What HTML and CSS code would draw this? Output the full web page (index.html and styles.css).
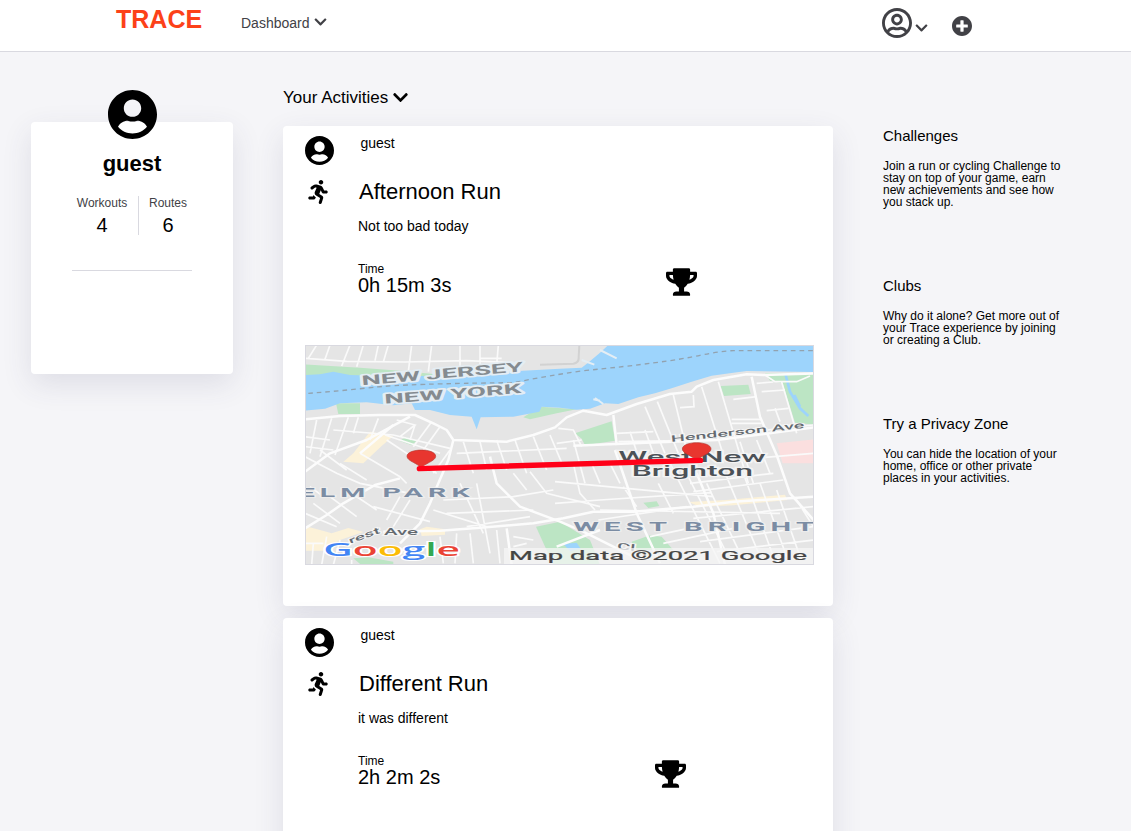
FILE: index.html
```html
<!DOCTYPE html>
<html lang="en">
<head>
<meta charset="utf-8">
<title>Trace</title>
<link rel="stylesheet" href="styles.css">
</head>
<body>
<svg class="defs" aria-hidden="true">
  <symbol id="user" viewBox="0 8 496 496"><path d="M248 8C111 8 0 119 0 256s111 248 248 248 248-111 248-248S385 8 248 8zm0 96c48.600 0 88 39.400 88 88s-39.400 88-88 88-88-39.400-88-88 39.400-88 88-88zm0 344c-58.700 0-111.300-26.600-146.500-68.200 18.800-35.400 55.600-59.800 98.500-59.800 2.400 0 4.800.4 7.100 1.100 13 4.200 26.600 6.900 40.900 6.900 14.300 0 28-2.700 40.900-6.900 2.300-.7 4.700-1.100 7.100-1.100 42.900 0 79.700 24.400 98.500 59.800C359.300 421.400 306.700 448 248 448z"/></symbol>
  <symbol id="user-outline" viewBox="0 8 496 496"><path d="M248 104c-53 0-96 43-96 96s43 96 96 96 96-43 96-96-43-96-96-96zm0 144c-26.500 0-48-21.500-48-48s21.500-48 48-48 48 21.500 48 48-21.500 48-48 48zm0-240C111 8 0 119 0 256s111 248 248 248 248-111 248-248S385 8 248 8zm0 448c-49.700 0-95.100-18.300-130.100-48.400 14.900-23 40.400-38.600 69.600-39.500 20.800 6.400 40.600 9.600 60.500 9.600s39.700-3.100 60.500-9.600c29.200 1 54.700 16.500 69.600 39.500-35 30.100-80.400 48.400-130.100 48.400zm162.700-84.100c-24.400-31.400-62.100-51.900-105.100-51.900-10.200 0-26 9.600-57.600 9.600-31.500 0-47.400-9.600-57.600-9.600-42.900 0-80.600 20.500-105.100 51.900C61.900 339.200 48 299.200 48 256c0-110.300 89.700-200 200-200s200 89.700 200 200c0 43.200-13.900 83.200-37.300 115.900z"/></symbol>
  <symbol id="plus" viewBox="8 8 496 496"><path d="M256 8C119 8 8 119 8 256s111 248 248 248 248-111 248-248S393 8 256 8zm144 276c0 6.600-5.400 12-12 12h-92v92c0 6.600-5.400 12-12 12h-56c-6.600 0-12-5.400-12-12v-92h-92c-6.600 0-12-5.400-12-12v-56c0-6.600 5.400-12 12-12h92v-92c0-6.600 5.400-12 12-12h56c6.600 0 12 5.400 12 12v92h92c6.600 0 12 5.400 12 12v56z"/></symbol>
  <symbol id="chevron" viewBox="0 0 448 512"><path d="M207.029 381.476L12.686 187.132c-9.373-9.373-9.373-24.569 0-33.941l22.667-22.667c9.357-9.357 24.522-9.375 33.901-.04L224 284.505l154.745-154.021c9.379-9.335 24.544-9.317 33.901.04l22.667 22.667c9.373 9.373 9.373 24.569 0 33.941L240.971 381.476c-9.373 9.372-24.569 9.372-33.942 0z"/></symbol>
  <symbol id="trophy" viewBox="0 0 576 512"><path d="M552 64H448V24c0-13.300-10.700-24-24-24H152c-13.300 0-24 10.700-24 24v40H24C10.700 64 0 74.700 0 88v56c0 35.700 22.500 72.400 61.900 100.700 31.500 22.700 69.800 37.100 110 41.700C203.300 338.500 240 360 240 360v72h-48c-35.300 0-64 20.700-64 56v12c0 6.600 5.400 12 12 12h296c6.600 0 12-5.400 12-12v-12c0-35.300-28.700-56-64-56h-48v-72s36.700-21.500 68.100-73.600c40.300-4.600 78.600-19 110-41.700 39.300-28.300 61.900-65 61.900-100.700V88c0-13.300-10.700-24-24-24zM99.300 192.800C74.900 175.200 64 155.600 64 144v-16h64.200c1 32.600 5.800 61.200 12.800 86.200-15.100-5.200-29.200-12.400-41.700-21.400zM512 144c0 16.100-17.700 36.100-35.300 48.800-12.500 9-26.700 16.200-41.800 21.400 7-25 11.800-53.600 12.800-86.200H512v16z"/></symbol>
  <symbol id="running" viewBox="0 0 416 512"><path d="M272 96c26.510 0 48-21.490 48-48S298.510 0 272 0s-48 21.490-48 48 21.490 48 48 48zM113.690 317.470l-14.800 34.520H32c-17.670 0-32 14.330-32 32s14.330 32 32 32h77.450c19.250 0 36.580-11.440 44.110-29.090l8.790-20.520-10.670-6.300c-17.320-10.230-30.060-25.370-37.990-42.610zM384 223.990h-44.030l-26.060-53.250c-12.500-25.550-35.450-44.230-61.780-50.940l-71.080-21.140c-28.300-6.800-57.770-.55-80.840 17.140l-39.670 30.410c-14.030 10.750-16.690 30.830-5.940 44.860s30.840 16.690 44.860 5.940l39.660-30.410c7.670-5.890 17.440-8 25.270-6.140l14.700 4.370-37.460 87.390c-12.620 29.480-1.310 64.010 26.300 80.310l84.980 50.170-27.470 87.730c-5.280 16.860 4.110 34.820 20.970 40.100 3.190 1 6.410 1.480 9.580 1.480 13.610 0 26.230-8.770 30.520-22.450l31.640-101.060c5.910-20.770-2.890-43.080-21.640-54.390l-61.240-36.140 31.310-78.280 20.270 41.430c8 16.340 24.920 26.890 43.110 26.890H384c17.670 0 32-14.330 32-32s-14.330-31.990-32-31.990z"/></symbol>
</svg>

<header class="topbar">
  <a class="logo">TRACE</a>
  <nav class="nav">Dashboard <svg class="nav-chevron"><use href="#chevron"/></svg></nav>
  <div class="account">
    <svg class="account-user"><use href="#user-outline"/></svg>
    <svg class="account-chevron"><use href="#chevron"/></svg>
    <svg class="account-plus"><use href="#plus"/></svg>
  </div>
</header>

<main class="page">
  <aside class="profile">
    <svg class="profile-avatar"><use href="#user"/></svg>
    <h2 class="profile-name">guest</h2>
    <div class="stats">
      <div class="stat stat-first"><span class="stat-label">Workouts</span><span class="stat-value">4</span></div>
      <div class="stat"><span class="stat-label">Routes</span><span class="stat-value">6</span></div>
    </div>
    <div class="profile-rule"></div>
  </aside>

  <section class="feed">
    <h1 class="feed-title">Your Activities <svg class="feed-chevron"><use href="#chevron"/></svg></h1>

    <article class="card">
      <div class="card-head">
        <svg class="card-avatar"><use href="#user"/></svg>
        <span class="card-user">guest</span>
      </div>
      <div class="card-title-row">
        <svg class="card-run"><use href="#running"/></svg>
        <h3 class="card-title">Afternoon Run</h3>
      </div>
      <p class="card-text">Not too bad today</p>
      <div class="card-metrics">
        <div class="time"><span class="time-label">Time</span><span class="time-value">0h 15m 3s</span></div>
        <svg class="trophy"><use href="#trophy"/></svg>
      </div>
      <svg class="map" viewBox="18 18 1521 654" preserveAspectRatio="none">
        <rect class="land" x="0" y="0" width="1560" height="700"/>
        <!-- parks and districts -->
        <g class="park">
          <path d="M15 73L180 83L300 92L400 102L500 120L250 125L15 115Z"/>
          <path d="M108 190H180V222H115Z"/>
          <path d="M298 302L318 292L350 302L335 316Z"/>
          <path d="M670 232L720 200L830 208L770 220L690 238Z"/>
          <path d="M825 280L935 244L945 302L855 316L845 296Z"/>
          <path d="M1262 138L1345 134L1352 162L1272 168Z"/>
          <path d="M1395 100H1545V254L1485 248L1448 130L1410 122Z"/>
          <path d="M708 560L780 545L870 600L900 675H760Z"/>
          <path d="M995 605L1050 586L1085 590L1120 630L1000 630Z"/>
          <path d="M1030 488L1070 484L1078 498L1045 504Z"/>
          <path d="M160 655L205 652L280 665V680H190Z"/>
        </g>
        <g class="sand">
          <path d="M15 558L60 570L95 580L145 564L190 576L120 600L70 632H15Z"/>
          <path d="M160 340L210 275L280 288L245 318L190 370L130 365Z"/>
          <path d="M360 568L380 560L435 568L435 584L365 588Z"/>
          <path d="M1165 486L1280 480L1455 464L1462 480L1300 496L1200 500Z"/>
        </g>
        <path class="pink" d="M1430 310L1545 298V370H1448Z"/>
        <path class="water" d="M15 105L60 103L100 95L150 105L250 108L400 108L520 100L640 94L780 86L845 83L868 65L900 38L925 15H1545V96L1340 93L1300 98L1235 107L1175 125L1115 145L1065 160L1015 172L955 192L915 190L870 206L830 209L780 203L725 200L718 215L640 230L542 232L530 268L515 230L450 225L390 210L345 210L335 190L280 196L200 187L120 190L75 206L15 212Z"/>
        <path class="water" d="M790 612L830 608L842 626L810 634Z"/>
        <path class="creek" d="M1457 105L1470 155L1500 205L1525 228M1483 165L1500 200"/>
        <!-- minor streets -->
        <g class="street">
          <path d="M15 55L140 64L315 66L500 62L640 68M50 15L25 55M90 15L75 58M150 15L125 78M190 15L170 80M235 15L225 62M265 15L250 66M335 15L325 95M395 15L385 95M480 15V80M540 15V80M595 15L590 75M540 55H605"/>
          <path d="M50 240L30 340M95 235L60 350M145 232L105 345M175 232L160 280M235 235L210 300M15 290L90 300M15 320L100 330M100 270L280 285L450 325M255 285L420 340M290 240L345 255L300 290M345 255L330 300M395 245L340 320M420 260L370 330M260 300L410 400M180 340L300 410L320 430M120 370L200 420M15 350L110 400L180 430L330 460M60 330L140 390"/>
          <path d="M490 305L520 400M540 305L560 390M590 300L620 390M645 300L680 400M700 290L740 390M750 285L790 380M470 340L800 325M530 430L570 640M480 430L550 580M640 400L680 450M690 395L740 460L900 500M450 330L400 400M430 480L640 470L760 450M440 520L700 510M500 560L690 530M640 590L700 600M400 510L560 560M300 470L260 540M330 480L280 560M220 500L390 545M15 520L110 560M40 490L120 550M90 470L170 530M140 450L230 510M30 440L70 470"/>
          <path d="M845 320L820 270L775 265M820 300L855 430M770 310L845 300M950 280L1060 275M955 305L1240 300M990 275L1010 335M1035 270L1060 340M1035 200L1095 340M1072 185L1135 340M1120 165L1160 330M1180 165L1182 200L1140 203M1205 140L1270 345M1255 125L1345 430M1295 238H1385M1295 250H1385M1300 178L1370 170M1370 130L1420 126M1385 155L1455 150M1400 212L1465 205M1425 205L1440 245M1445 126L1490 280M1400 270L1540 255M1395 105L1425 125H1490L1530 108M1320 305L1360 430M1370 300L1410 400"/>
          <path d="M765 425L1240 470M820 370L840 460L885 510M875 370L900 430M930 370L960 430M765 490L900 480L1235 458M895 540L1160 500M900 510L1440 520M1075 430L1120 520M1110 370L1260 670M1160 400L1275 630M1220 430L1320 640M1280 410L1380 650M1330 400L1420 650M1380 430L1460 650M1430 450L1500 650M1490 480L1540 560M1170 430L1420 400M1180 455L1450 420M1180 535L1540 500M1050 590L1190 560M1090 610L1300 565M1200 605L1540 560M1250 635L1540 600M970 440L1010 500M1300 360L1540 340"/>
          <path d="M15 610H70M40 610L35 675M80 590L65 675M120 600L100 675M155 660V680M470 580L465 670M420 590L430 670M510 580L520 670M590 570L600 670M640 620L680 610"/>
        </g>
        <!-- main roads -->
        <g class="road">
          <path d="M15 238L120 228L240 225L345 225L400 250L440 270L460 300L620 305L700 285L765 262L800 232L850 212L920 225L1010 192L1110 162L1175 155L1190 140L1240 120L1340 103L1390 105L1545 100"/>
          <path d="M15 565L80 525L130 490L225 435L300 415M460 300L445 360L415 430L390 490L360 550L300 610M570 350L590 430L660 500L780 545L850 575L1010 655"/>
          <path d="M15 395L90 340L200 300L330 230M250 575L420 572L540 563L700 550L790 535L880 515L1000 515L1180 500L1300 485L1545 470"/>
          <path d="M940 225L950 315M1355 110L1380 230L1430 345L1470 460L1545 545M945 330L1010 520L1080 670M1190 400L1240 520L1275 675M620 565L635 675M770 620L900 570"/>
          <path d="M820 317L1000 310L1250 300L1545 262M180 340L280 255"/>
        </g>
        <path class="airport" d="M720 74L820 71Q838 68 836 50L838 18"/>
        <path class="pier" d="M900 30L950 55M845 60L883 74M885 174L910 192M880 178L900 182"/>
        <path class="border-line" d="M25 160Q120 153 220 142T640 128Q740 108 850 92Q1100 68 1200 46Q1270 32 1300 32H1545"/>
        <!-- place labels -->
        <g class="state">
          <text x="186" y="136" textLength="486" lengthAdjust="spacingAndGlyphs" transform="rotate(-5 186 136)">NEW JERSEY</text>
          <text x="254" y="191" textLength="412" lengthAdjust="spacingAndGlyphs" transform="rotate(-4.500 254 191)">NEW YORK</text>
        </g>
        <text class="district" x="-4" y="470" textLength="528" lengthAdjust="spacingAndGlyphs">ELM PARK</text>
        <text class="street-name" x="1114" y="306" textLength="402" lengthAdjust="spacingAndGlyphs" transform="rotate(-6 1114 306)">Henderson Ave</text>
        <text class="street-name" x="150" y="612" textLength="98" lengthAdjust="spacingAndGlyphs" transform="rotate(-20 150 612)">rest</text>
        <text class="street-name" x="252" y="585" textLength="102" lengthAdjust="spacingAndGlyphs">Ave</text>
        <text class="street-name" x="950" y="626" textLength="55" lengthAdjust="spacingAndGlyphs" transform="rotate(8 950 626)">Cl</text>
        <text class="town" x="955" y="367" textLength="442" lengthAdjust="spacingAndGlyphs">West New</text>
        <text class="town" x="995" y="409" textLength="364" lengthAdjust="spacingAndGlyphs">Brighton</text>
        <text class="district" x="820" y="574" textLength="738" lengthAdjust="spacingAndGlyphs">WEST BRIGHT</text>
        <!-- route and markers -->
        <g class="pin">
          <path d="M321 349C321 324 407 324 407 349C407 364 371 370 364 386C357 370 321 364 321 349Z"/>
          <path d="M1147 327C1147 302 1233 302 1233 327C1233 342 1197 348 1190 364C1183 348 1147 342 1147 327Z"/>
        </g>
        <path class="route" d="M358 386L1202 361"/>
        <text class="google" x="70" y="649" textLength="410" lengthAdjust="spacingAndGlyphs"><tspan class="g-blue">G</tspan><tspan class="g-red">o</tspan><tspan class="g-yellow">o</tspan><tspan class="g-blue">g</tspan><tspan class="g-green">l</tspan><tspan class="g-red">e</tspan></text>
        <rect class="credit-bg" x="612" y="624" width="940" height="50"/>
        <text class="credit" x="627" y="661" textLength="894" lengthAdjust="spacingAndGlyphs">Map data ©2021 Google</text>
      </svg>
    </article>

    <article class="card">
      <div class="card-head">
        <svg class="card-avatar"><use href="#user"/></svg>
        <span class="card-user">guest</span>
      </div>
      <div class="card-title-row">
        <svg class="card-run"><use href="#running"/></svg>
        <h3 class="card-title">Different Run</h3>
      </div>
      <p class="card-text">it was different</p>
      <div class="card-metrics">
        <div class="time"><span class="time-label">Time</span><span class="time-value">2h 2m 2s</span></div>
        <svg class="trophy"><use href="#trophy"/></svg>
      </div>
    </article>
  </section>

  <aside class="promos">
    <section class="promo promo-challenges">
      <h4 class="promo-title">Challenges</h4>
      <p class="promo-text">Join a run or cycling Challenge to<br>stay on top of your game, earn<br>new achievements and see how<br>you stack up.</p>
    </section>
    <section class="promo">
      <h4 class="promo-title">Clubs</h4>
      <p class="promo-text">Why do it alone? Get more out of<br>your Trace experience by joining<br>or creating a Club.</p>
    </section>
    <section class="promo">
      <h4 class="promo-title">Try a Privacy Zone</h4>
      <p class="promo-text">You can hide the location of your<br>home, office or other private<br>places in your activities.</p>
    </section>
  </aside>
</main>
</body>
</html>
```
FILE: styles.css
```css
* { box-sizing: border-box; margin: 0; padding: 0; }
html, body { height: 831px; overflow: hidden; }
body { background: #f5f5f8; color: #000; font-family: "Liberation Sans", Arial, sans-serif; display: flex; flex-direction: column; }
svg { display: block; flex: none; fill: currentColor; }
.defs { width: 0; height: 0; position: absolute; }
h1, h2, h3, h4 { font-weight: 400; }

.topbar { height: 52px; flex: none; display: flex; background: #fff; border-bottom: 1px solid #d9d9e0; padding-left: 116px; color: #414146; }
.logo { width: 125px; padding-top: 5px; font-size: 25px; line-height: 28px; font-weight: 700; color: #fc4119; }
.nav { width: 641px; display: flex; padding-top: 15px; font-size: 14px; line-height: 16px; gap: 4px; }
.nav-chevron { width: 13px; height: 14px; }
.account { display: flex; padding-top: 8px; }
.account-user { width: 30px; height: 30px; }
.account-chevron { width: 13px; height: 14px; margin: 13px 24px 0 3px; }
.account-plus { width: 20px; height: 20px; margin-top: 8px; }

.page { display: flex; align-items: flex-start; padding-left: 31px; height: 779px; overflow: hidden; }
.profile { width: 202px; height: 252px; margin: 70px 50px 0 0; display: flex; flex-direction: column; align-items: center; background: #fff; border-radius: 4px; box-shadow: 0 10px 30px rgba(60, 60, 100, .12); }
.profile-avatar { width: 49px; height: 49px; margin-top: -32px; }
.profile-name { margin-top: 12px; font-size: 22px; line-height: 26px; font-weight: 700; }
.stats { display: flex; margin-top: 19px; }
.stat { width: 58px; height: 39px; display: flex; flex-direction: column; align-items: center; }
.stat-first { width: 73px; border-right: 1px solid #d9d9e0; }
.stats .stat-label { font-size: 12px; line-height: 14px; color: #414146; }
.stat-value { margin-top: 4px; font-size: 20px; line-height: 23px; }
.stats { margin-right: 1px; }
.profile-rule { width: 120px; height: 1px; margin-top: 35px; background: #d9d9e0; }

.feed { width: 550px; margin-right: 50px; }
.feed-title { display: flex; gap: 5px; height: 74px; padding-top: 36px; font-size: 17px; line-height: 20px; }
.feed-chevron { width: 15px; height: 17px; margin-top: 1px; }
.card { height: 480px; margin-bottom: 12px; padding: 10px 19px 0 22px; background: #fff; border-radius: 4px; box-shadow: 0 10px 30px rgba(60, 60, 100, .12); }
.card-head { display: flex; height: 42px; }
.card-avatar { width: 29px; height: 29px; margin-right: 26.500px; }
.card-user { font-size: 14px; line-height: 15px; }
.card-title-row { display: flex; height: 40px; padding-left: 3px; }
.card-run { width: 20px; height: 24px; margin: 2px 31px 0 0; }
.card-title { padding-top: 1px; font-size: 22px; line-height: 26px; }
.card-text { padding-left: 53px; font-size: 14px; line-height: 16px; }
.card-metrics { display: flex; gap: 215px; height: 83px; margin: 28px 0 0 53px; }
.time { display: flex; flex-direction: column; }
.time-label { font-size: 12px; line-height: 14px; }
.time-value { margin-top: -2px; font-size: 20px; line-height: 23px; }
.trophy { width: 31px; height: 28px; margin-top: 6px; }

.promos { padding-top: 75px; width: 200px; }
.promo { height: 138px; }
.promo-challenges { height: 150px; }
.promo-title { font-size: 15px; line-height: 18px; }
.promo-text { margin-top: 15px; font-size: 12px; line-height: 12px; }

.map { width: 509px; height: 220px; border: 1px solid #d9d9e0; }
.land { fill: #e5e5e5; }
.park { fill: #bce5c4; }
.sand { fill: #fcf2d9; }
.pink { fill: #fbdfdf; }
.water { fill: #9dd4fc; }
.creek { fill: none; stroke: #9dd4fc; stroke-width: 8; }
.street { fill: none; stroke: #fafafa; stroke-width: 5; }
.road { fill: none; stroke: #fcfcfc; stroke-width: 7.500; stroke-linejoin: round; }
.airport { fill: none; stroke: #d2d2d2; stroke-width: 6; }
.pier { fill: none; stroke: #e5eef4; stroke-width: 6; }
.border-line { fill: none; stroke: #92a2af; stroke-width: 4; stroke-dasharray: 14 12; }
.state { font: 700 40px Roboto, sans-serif; fill: #858b90; stroke: #e4edf3; stroke-width: 10; stroke-linejoin: round; paint-order: stroke; }
.district { font: 700 39px Roboto, sans-serif; letter-spacing: 7px; fill: #7b8ca3; stroke: #eee; stroke-width: 5; paint-order: stroke; }
.street-name { font: 500 27px Roboto, sans-serif; fill: #646a70; stroke: #f5f5f5; stroke-width: 5; paint-order: stroke; }
.town { font: 500 42px Roboto, sans-serif; fill: #4b5157; stroke: #f3f3f3; stroke-width: 7; paint-order: stroke; }
.pin { fill: #e8362f; stroke: #b6362f; stroke-width: 2; }
.route { fill: none; stroke: #ff0018; stroke-width: 16; stroke-linecap: round; }
.google { font: 600 54px "Open Sans", sans-serif; stroke: #fff; stroke-width: 6; paint-order: stroke; }
.g-blue { fill: #4285f4; }
.g-red { fill: #ea4335; }
.g-yellow { fill: #fbbc05; }
.g-green { fill: #34a853; }
.credit-bg { fill: #f5f5f5; fill-opacity: .75; }
.credit { font: 400 40px Roboto, sans-serif; fill: #444; stroke: #444; stroke-width: .7; }
```
